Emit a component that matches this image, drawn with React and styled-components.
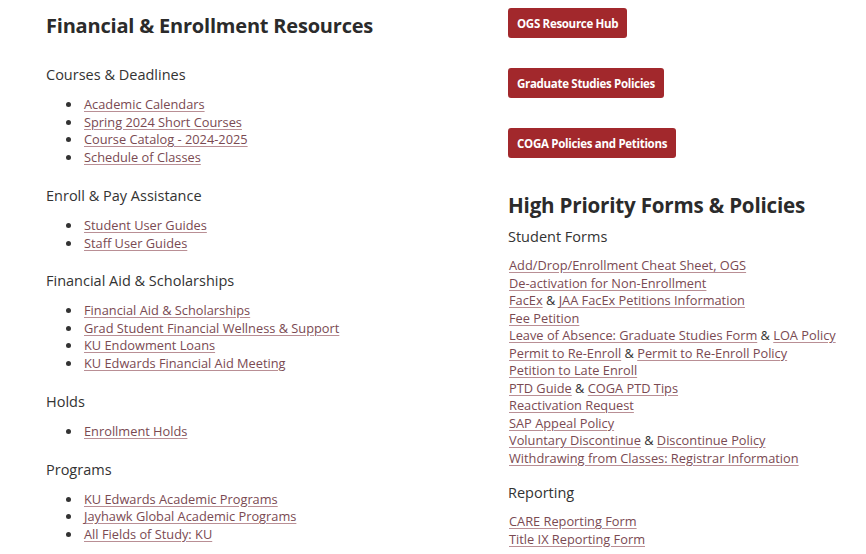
import React from "react";
import styled, { createGlobalStyle } from "styled-components";

const GlobalStyle = createGlobalStyle`
    body {
        margin: 0;
        background: #fff;
        font-family: "Open Sans", "Noto Sans", sans-serif;
        color: #333;
    }
`;

const Page = styled.div`
    display: grid;
    grid-template-columns: 462px 1fr;
    padding-left: 46px;
    width: 866px;
    height: 554px;
    box-sizing: border-box;
    overflow: hidden;
`;

const Column = styled.div`
    display: flex;
    flex-direction: column;
    padding-top: ${(p) => p.top}px;
`;

const Title = styled.h2`
    margin: ${(p) => p.gap || 0}px 0 0;
    font-size: ${(p) => p.size || 20}px;
    line-height: 28px;
    font-weight: 700;
    color: #2b2b2b;
    letter-spacing: -0.2px;
`;

const Section = styled.section`
    margin-top: ${(p) => p.gap}px;
`;

const Heading = styled.h3`
    margin: 0 0 ${(p) => p.after || 11}px;
    font-size: 14.5px;
    line-height: 20px;
    font-weight: 400;
    color: #333;
`;

const BulletList = styled.ul`
    margin: 0;
    padding-left: 20px;
    list-style: none;
    font-size: 12.8px;
    line-height: 17.5px;
`;

const Item = styled.li`
    display: flex;
    align-items: center;

    &::before {
        content: "";
        flex: none;
        width: 5px;
        height: 5px;
        border-radius: 50%;
        background: #333;
        margin-right: 13px;
    }
`;

const PlainList = styled.div`
    display: flex;
    flex-direction: column;
    padding-left: 1px;
    font-size: 12.8px;
    line-height: 17.5px;
    color: #333;
`;

const Link = styled.a`
    color: #7a4a52;
    text-decoration: underline;
    text-decoration-color: #b98f95;
    text-underline-offset: 2px;
`;

const Button = styled.a`
    align-self: flex-start;
    display: inline-flex;
    align-items: center;
    height: 30px;
    padding: 0 9px;
    margin-bottom: 30px;
    border-radius: 3px;
    background: #a2282c;
    color: #fff;
    font-size: 11.5px;
    font-weight: 700;
    text-decoration: none;
    letter-spacing: -0.3px;
`;

const leftSections = [
    {
        title: "Courses & Deadlines",
        gap: 25,
        links: [
            "Academic Calendars",
            "Spring 2024 Short Courses",
            "Course Catalog - 2024-2025",
            "Schedule of Classes",
        ],
    },
    {
        title: "Enroll & Pay Assistance",
        gap: 20,
        links: ["Student User Guides", "Staff User Guides"],
    },
    {
        title: "Financial Aid & Scholarships",
        gap: 19,
        links: [
            "Financial Aid & Scholarships",
            "Grad Student Financial Wellness & Support",
            "KU Endowment Loans",
            "KU Edwards Financial Aid Meeting",
        ],
    },
    { title: "Holds", gap: 20, links: ["Enrollment Holds"] },
    {
        title: "Programs",
        gap: 19,
        links: [
            "KU Edwards Academic Programs",
            "Jayhawk Global Academic Programs",
            "All Fields of Study: KU",
        ],
    },
];

const studentForms = [
    ["Add/Drop/Enrollment Cheat Sheet, OGS"],
    ["De-activation for Non-Enrollment"],
    ["FacEx", "JAA FacEx Petitions Information"],
    ["Fee Petition"],
    ["Leave of Absence: Graduate Studies Form", "LOA Policy"],
    ["Permit to Re-Enroll", "Permit to Re-Enroll Policy"],
    ["Petition to Late Enroll"],
    ["PTD Guide", "COGA PTD Tips"],
    ["Reactivation Request"],
    ["SAP Appeal Policy"],
    ["Voluntary Discontinue", "Discontinue Policy"],
    ["Withdrawing from Classes: Registrar Information"],
];

const reporting = [["CARE Reporting Form"], ["Title IX Reporting Form"]];

const LinkRows = ({ rows }) => (
    <PlainList>
        {rows.map((row) => (
            <div key={row[0]}>
                {row.map((text, i) => (
                    <React.Fragment key={text}>
                        {i > 0 && " & "}
                        <Link href="#">{text}</Link>
                    </React.Fragment>
                ))}
            </div>
        ))}
    </PlainList>
);

const App = () => (
    <>
        <GlobalStyle />
        <Page>
            <Column top={12}>
                <Title>Financial &amp; Enrollment Resources</Title>
                {leftSections.map((s) => (
                    <Section key={s.title} gap={s.gap}>
                        <Heading>{s.title}</Heading>
                        <BulletList>
                            {s.links.map((l) => (
                                <Item key={l}>
                                    <Link href="#">{l}</Link>
                                </Item>
                            ))}
                        </BulletList>
                    </Section>
                ))}
            </Column>
            <Column top={8}>
                <Button href="#">OGS Resource Hub</Button>
                <Button href="#">Graduate Studies Policies</Button>
                <Button href="#">COGA Policies and Petitions</Button>
                <Title gap={3} size={20.6}>
                    High Priority Forms &amp; Policies
                </Title>
                <Section gap={8}>
                    <Heading after={10}>Student Forms</Heading>
                    <LinkRows rows={studentForms} />
                </Section>
                <Section gap={16}>
                    <Heading after={10}>Reporting</Heading>
                    <LinkRows rows={reporting} />
                </Section>
            </Column>
        </Page>
    </>
);

export default App;
